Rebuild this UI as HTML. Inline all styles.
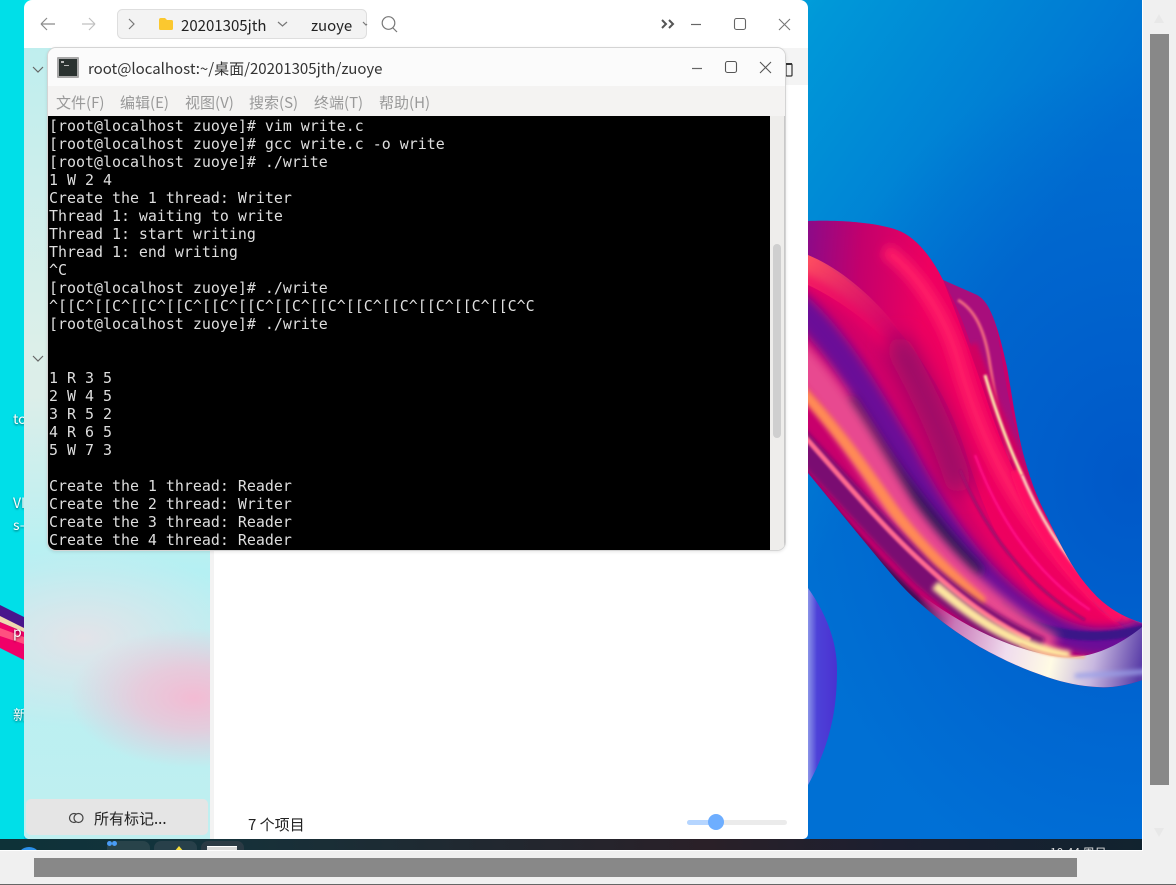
<!DOCTYPE html>
<html><head><meta charset="utf-8"><style>
html,body{margin:0;padding:0;width:1176px;height:885px;overflow:hidden;background:#f0f0f0}
*{box-sizing:border-box}
.a{position:absolute}
body{font-family:"Noto Sans CJK SC","Liberation Sans",sans-serif;color:#222}
.t{position:absolute;white-space:nowrap;line-height:20px}
#term{position:absolute;left:49px;top:117px;margin:0;font:14.95px/18px "DejaVu Sans Mono",monospace;color:#dedede;white-space:pre}
.dt{position:absolute;left:13px;color:#fff;font-size:14px;line-height:16px;text-shadow:0 1px 2px rgba(0,0,0,.6);white-space:nowrap}
</style></head><body>
<div class="a" id="desk" style="left:0;top:0;width:1142px;height:839px;overflow:hidden;background:radial-gradient(ellipse 340px 420px at 1130px 480px,#0058c8 0%,rgba(0,88,200,0) 100%),linear-gradient(125deg,#00e6ec 0%,#00d8e8 28%,#0098d8 48%,#0070d2 70%,#0070d8 100%)">
<div class="a" style="left:0;top:0;width:24px;height:839px;background:#00dfe8"></div>
<svg class="a" style="left:0;top:0" width="1142" height="839" viewBox="0 0 1142 839">
<defs>
<linearGradient id="top" x1="808" y1="230" x2="930" y2="240" gradientUnits="userSpaceOnUse"><stop offset="0" stop-color="#8c0a88"/><stop offset=".45" stop-color="#c4006c"/><stop offset="1" stop-color="#ee0060"/></linearGradient>
<linearGradient id="blob" x1="808" y1="0" x2="838" y2="0" gradientUnits="userSpaceOnUse"><stop offset="0" stop-color="#8a94e8"/><stop offset=".3" stop-color="#4d42d8"/><stop offset="1" stop-color="#4a30d0"/></linearGradient>
<linearGradient id="cream" x1="915" y1="610" x2="1142" y2="660" gradientUnits="userSpaceOnUse"><stop offset="0" stop-color="#b04a98" stop-opacity="0"/><stop offset=".18" stop-color="#c878b8"/><stop offset=".42" stop-color="#f0dcee"/><stop offset=".62" stop-color="#fffbe4"/><stop offset=".8" stop-color="#c8b8e0"/><stop offset="1" stop-color="#5a3ea8"/></linearGradient>
<linearGradient id="red" x1="808" y1="255" x2="900" y2="330" gradientUnits="userSpaceOnUse"><stop offset="0" stop-color="#ff5060"/><stop offset="1" stop-color="#e8306c" stop-opacity="0"/></linearGradient>
<clipPath id="sw"><path d="M808 221C830 220 872 221 897 230C914 236 930 254 943 280L977 295C986 300 990 310 993 317C1000 335 1003 350 1007 367C1012 395 1016 425 1023 453C1030 480 1038 500 1047 517C1058 540 1068 560 1080 577C1094 595 1108 612 1142 623V680C1125 686 1110 688 1097 687C1080 686 1065 683 1047 677C1020 668 1000 658 980 647C955 632 935 617 913 597C895 580 880 560 863 540L808 473Z"/></clipPath>
<filter id="b1" filterUnits="userSpaceOnUse" x="760" y="180" width="420" height="540"><feGaussianBlur stdDeviation="1"/></filter>
<filter id="b2" filterUnits="userSpaceOnUse" x="760" y="180" width="420" height="540"><feGaussianBlur stdDeviation="2.500"/></filter>
<filter id="b4" filterUnits="userSpaceOnUse" x="760" y="180" width="420" height="540"><feGaussianBlur stdDeviation="5"/></filter>
<filter id="b8" filterUnits="userSpaceOnUse" x="760" y="180" width="420" height="540"><feGaussianBlur stdDeviation="11"/></filter>
</defs>
<path d="M808 588C825 612 837 640 837 670C837 710 830 745 808 785Z" fill="url(#blob)"/>
<g clip-path="url(#sw)">
<rect x="800" y="215" width="345" height="480" fill="#c8006c"/>
<!-- back piece -->
<path d="M943 280L977 295C986 300 990 310 993 317C1003 350 1005 400 1023 453C1040 505 1070 570 1142 623L1100 640C1030 560 1000 470 985 400C975 350 960 310 943 280Z" fill="#a80e7c"/>
<path d="M958 300C975 310 985 330 990 365C995 395 1000 425 1010 460" stroke="#f06a80" stroke-width="3" fill="none" filter="url(#b1)"/>
<path d="M970 345C985 385 1000 425 1012 450C1030 500 1050 540 1080 575" stroke="#d00060" stroke-width="14" fill="none" filter="url(#b2)"/>
<!-- top flap -->
<path d="M808 221C830 220 872 221 897 230C914 236 930 254 943 280C955 310 968 345 980 380C1000 440 1030 530 1100 610L1142 640V660L1060 640C1010 590 985 520 960 450C935 380 880 300 808 255Z" fill="url(#top)"/>
<path d="M885 250C915 270 945 315 958 360C975 420 1000 480 1040 530C1070 570 1100 600 1135 625" stroke="#ff1c68" stroke-width="14" fill="none" filter="url(#b4)"/>
<!-- main body -->
<path d="M808 255C880 295 940 370 965 450C985 515 1015 590 1070 630C1090 642 1120 640 1142 625V660C1100 665 1060 660 1030 640C970 600 940 530 910 470C880 410 850 350 808 303Z" fill="#d40068"/>
<path d="M808 255C840 268 880 300 910 345L880 335C860 315 830 295 808 285Z" fill="url(#red)"/>
<path d="M800 278C850 300 900 350 935 420C965 490 1000 570 1060 615" stroke="#f00064" stroke-width="10" fill="none" filter="url(#b4)" opacity=".8"/>
<path d="M900 350C925 395 945 440 958 480" stroke="#920c68" stroke-width="26" fill="none" filter="url(#b8)" stroke-linecap="round"/>
<path d="M1015 470C1030 520 1065 575 1120 620" stroke="#ff0a64" stroke-width="10" fill="none" filter="url(#b2)"/>
<path d="M975 455C995 510 1030 570 1090 610" stroke="#ff1088" stroke-width="2.500" fill="none" filter="url(#b1)"/>
<path d="M960 470C985 530 1025 585 1085 620" stroke="#a0086c" stroke-width="3" fill="none" filter="url(#b1)"/>
<!-- highlight edge -->
<path d="M985 375C995 410 1010 450 1022 475" stroke="#fff2b0" stroke-width="3" fill="none" filter="url(#b1)"/>
<path d="M1022 475C1045 530 1085 595 1150 626" stroke="#ffd8c0" stroke-width="3" fill="none" filter="url(#b1)"/>
<!-- purple left band continuing to dark stripe -->
<path d="M790 300C835 335 870 400 900 450C930 510 980 590 1045 625C1080 645 1115 650 1160 625" stroke="#6a1098" stroke-width="28" fill="none" filter="url(#b4)"/>
<path d="M1000 605C1035 632 1085 648 1160 625" stroke="#3a1288" stroke-width="9" fill="none" filter="url(#b1)"/>
<path d="M850 405C875 445 895 475 915 500C935 525 950 545 975 570" stroke="#261650" stroke-width="15" fill="none" filter="url(#b4)" stroke-linecap="round"/>
<path d="M790 350C835 395 865 450 900 510C935 560 985 610 1050 650" stroke="#e84a90" stroke-width="32" fill="none" filter="url(#b4)"/>
<path d="M790 378C835 425 865 470 892 508C915 540 940 565 980 600" stroke="#ff8a55" stroke-width="11" fill="none" filter="url(#b2)" stroke-linecap="round"/>
<path d="M790 432C830 475 880 530 925 575C960 605 995 630 1040 650" stroke="#7a0a72" stroke-width="26" fill="none" filter="url(#b2)"/>
<path d="M790 420C835 470 880 525 925 565C960 597 990 620 1030 640" stroke="#ff6a90" stroke-width="5" fill="none" filter="url(#b1)"/>
<path d="M790 462C835 515 865 550 890 575C910 595 925 610 945 625" stroke="#3a1058" stroke-width="10" fill="none" filter="url(#b2)"/>
<path d="M935 585C970 615 1010 645 1070 656" stroke="#ffe8a0" stroke-width="10" fill="none" filter="url(#b2)"/>
<path d="M915 590C960 625 1010 650 1060 657C1090 660 1120 645 1142 627V690H915Z" fill="url(#cream)"/>
<path d="M1020 644C1040 654 1060 658 1085 657" stroke="#f5b890" stroke-width="2.500" fill="none" filter="url(#b1)"/>
<path d="M1075 676C1100 674 1125 674 1150 671" stroke="#9aa0e8" stroke-width="4" fill="none" filter="url(#b2)"/>
</g>
<path d="M0 605L24 617V631L0 620Z" fill="#48168c"/>
<path d="M0 616L24 628V632L0 622Z" fill="#f0d8b0"/>
<path d="M0 622L24 632V660L0 648Z" fill="#f00068"/>
<path d="M0 628L24 637V644L0 636Z" fill="#ff5080"/>
</svg>
<div class="dt" style="top:411px">to</div>
<div class="dt" style="top:495px">VI</div>
<div class="dt" style="top:517px">s-</div>
<div class="dt" style="top:624px">p</div>
<div class="dt" style="top:707px">新</div>
</div>

<!-- taskbar -->
<div class="a" style="left:0;top:839px;width:1142px;height:11px;overflow:hidden;background:linear-gradient(90deg,#0e3238 0%,#13333c 15%,#1f2a32 38%,#2a2028 62%,#1c1f30 78%,#11232f 100%)">
<div class="a" style="left:17px;top:8px;width:24px;height:24px;border-radius:50%;background:#2b8fe8"></div>
<div class="a" style="left:107px;top:2px;width:43px;height:20px;border-radius:7px;background:#28434a"></div>
<div class="a" style="left:154px;top:2px;width:43px;height:20px;border-radius:7px;background:#28404a"></div>
<div class="a" style="left:201px;top:2px;width:43px;height:20px;border-radius:7px;background:#2b3a44"></div>
<div class="a" style="left:107px;top:2px;width:5px;height:5px;border-radius:50%;background:#4a9cf5"></div>
<div class="a" style="left:112px;top:2px;width:5px;height:5px;border-radius:50%;background:#4a9cf5"></div>
<div class="a" style="left:174px;top:7px;width:0;height:0;border-left:5px solid transparent;border-right:5px solid transparent;border-bottom:6px solid #f6dc3c"></div>
<div class="a" style="left:207px;top:7px;width:30px;height:8px;background:#d8d8d8;border-top:1px solid #fff"></div>
<div class="t" style="left:1050px;top:7px;color:#ddd;font-size:12px;line-height:14px">10:44 周日</div>
</div>

<!-- page scrollbars -->
<div class="a" style="left:1142px;top:0;width:1px;height:851px;background:#fff"></div>
<div class="a" style="left:0;top:850px;width:1143px;height:1px;background:#fff"></div>
<div class="a" style="left:1143px;top:0;width:33px;height:885px;background:#f0f0f0"></div>
<div class="a" style="left:0;top:851px;width:1176px;height:34px;background:#f0f0f0"></div>
<div class="a" style="left:1150px;top:34px;width:19px;height:751px;background:#888"></div>
<div class="a" style="left:1154px;top:14px;width:0;height:0;border-left:5.5px solid transparent;border-right:5.5px solid transparent;border-bottom:9px solid #e8e8e8"></div>
<div class="a" style="left:1154px;top:828px;width:0;height:0;border-left:5.5px solid transparent;border-right:5.5px solid transparent;border-top:9px solid #e8e8e8"></div>
<div class="a" style="left:34px;top:858px;width:1043px;height:19px;background:#888"></div>
<div class="a" style="left:0;top:884px;width:1176px;height:1px;background:#666"></div>

<!-- file manager -->
<div class="a" style="left:24px;top:0;width:784px;height:839px;background:#fff;border-radius:8px 8px 5px 5px;overflow:hidden">
<div class="a" style="left:0;top:48px;width:186px;height:791px;background:radial-gradient(ellipse 125px 70px at 170px 650px,#f3bbd3 0%,rgba(243,190,212,.7) 45%,rgba(243,190,212,0) 100%),radial-gradient(ellipse 170px 90px at 60px 590px,rgba(232,226,232,.9) 0%,rgba(232,226,232,0) 100%),linear-gradient(180deg,#bfeeee 0%,#dcefe9 38%,#dceee9 44%,#b5f0f3 66%,#c0eff0 100%)"></div>
<div class="a" style="left:186px;top:48px;width:4px;height:791px;background:#f3f3f3"></div>
<div class="a" style="left:190px;top:48px;width:594px;height:37px;background:#f4f4f4"></div>
<div class="a" style="left:2px;top:799px;width:182px;height:36px;background:#e5e5e5;border-radius:5px"></div>
<div class="t" style="left:70px;top:809px;font-size:15px;color:#222">所有标记...</div>
<div class="t" style="left:224px;top:815px;font-size:15px;color:#222">7 个项目</div>
<div class="a" style="left:663px;top:820px;width:100px;height:5px;border-radius:3px;background:#ebebeb"></div>
<div class="a" style="left:663px;top:820px;width:29px;height:5px;border-radius:3px 0 0 3px;background:#b5d5ff"></div>
<div class="a" style="left:684px;top:814px;width:16px;height:16px;border-radius:50%;background:#6eaeff"></div>
</div>
<svg class="a" style="left:24px;top:0" width="784" height="839" viewBox="24 0 784 839" fill="none">
<path d="M55 24H41M41 24L47 18M41 24L47 30" stroke="#8a8a8a" stroke-width="1.2"/>
<path d="M82 24H95M95 24L89 18M95 24L89 30" stroke="#c0c0c0" stroke-width="1.2"/>
<rect x="117.500" y="9.500" width="249" height="29" rx="5" fill="#f3f3f3" stroke="#dedede"/>
<path d="M129 19L134 24L129 29" stroke="#777" stroke-width="1.2"/>
<path d="M159 20C159 18.800 159.500 18 161 18H165L167 20H171.500C172.500 20 173 20.500 173 21.500V28.500C173 29.500 172.500 30 171.500 30H160.500C159.500 30 159 29.500 159 28.500Z" fill="#fbc82f"/>
<path d="M278 22L282.500 26L287 22" stroke="#777" stroke-width="1.2"/>
<path d="M363 22L366 25L367 24" stroke="#777" stroke-width="1.2"/>
<circle cx="388.500" cy="23" r="6.300" stroke="#777" stroke-width="1.200"/>
<path d="M393 28L397 32" stroke="#777" stroke-width="1.200"/>
<path d="M662 20L666 24L662 28M669 20L673 24L669 28" stroke="#555" stroke-width="2"/>
<path d="M691 24.500H701" stroke="#666" stroke-width="1.200"/>
<rect x="734.500" y="18.500" width="11" height="11" rx="2" stroke="#666" stroke-width="1.100"/>
<path d="M779 19L790 30M790 19L779 30" stroke="#777" stroke-width="1.100"/>
<path d="M33 67L38 72L43 67" stroke="#666" stroke-width="1.200"/>
<path d="M33 356L38 361L43 356" stroke="#666" stroke-width="1.200"/>
<rect x="786" y="64" width="6" height="12" rx="1" stroke="#333" stroke-width="1.200"/>
<path d="M786 64H792" stroke="#333" stroke-width="2"/>
<circle cx="74" cy="818" r="4.500" stroke="#444" stroke-width="1.200"/>
<circle cx="78.500" cy="818" r="4.500" fill="#e5e5e5" stroke="#444" stroke-width="1.200"/>
</svg>
<div class="t" style="left:181px;top:16px;font-size:15px;color:#222">20201305jth</div>
<div class="t" style="left:311px;top:16px;font-size:15px;color:#222">zuoye</div>

<!-- terminal -->
<div class="a" style="left:47px;top:47px;width:739px;height:504px;border-radius:9px;border:1px solid #d4d4d4;box-shadow:0 1px 3px rgba(0,0,0,.1)"></div>
<div class="a" style="left:48px;top:48px;width:737px;height:502px;border-radius:8px;overflow:hidden;background:#eeedeb">
<div class="a" style="left:0;top:0;width:737px;height:38px;background:#fbfbfb"></div>
<div class="a" style="left:0;top:38px;width:737px;height:30px;background:#f4f3f2"></div>
<div class="a" style="left:0;top:68px;width:722px;height:434px;background:#000"></div>
<div class="a" style="left:725px;top:196px;width:8px;height:194px;border-radius:4px;background:#cfcfcf"></div>
<div class="a" style="left:736px;top:68px;width:1px;height:434px;background:#c8c8c8"></div>
</div>
<div class="a" style="left:57px;top:57px;width:22px;height:21px;background:#2a3230;border:2px solid #a8a8a8;border-radius:1px"></div>
<div class="a" style="left:61px;top:61px;width:3px;height:2px;background:#bbb"></div>
<div class="a" style="left:64px;top:65px;width:5px;height:1px;background:#bbb"></div>
<div class="t" style="left:88px;top:59px;font-size:15px;color:#333">root@localhost:~/桌面/20201305jth/zuoye</div>
<div class="t" style="left:56px;top:93px;font-size:15px;color:#999">文件(F)</div>
<div class="t" style="left:120px;top:93px;font-size:15px;color:#999">编辑(E)</div>
<div class="t" style="left:185px;top:93px;font-size:15px;color:#999">视图(V)</div>
<div class="t" style="left:249px;top:93px;font-size:15px;color:#999">搜索(S)</div>
<div class="t" style="left:314px;top:93px;font-size:15px;color:#999">终端(T)</div>
<div class="t" style="left:379px;top:93px;font-size:15px;color:#999">帮助(H)</div>
<svg class="a" style="left:680px;top:50px" width="100" height="36" viewBox="680 50 100 36" fill="none">
<path d="M692 68.500H702" stroke="#666" stroke-width="1.200"/>
<rect x="725.500" y="61.500" width="11" height="11" rx="2" stroke="#555" stroke-width="1.100"/>
<path d="M760 62L771 73M771 62L760 73" stroke="#555" stroke-width="1.100"/>
</svg>
<pre id="term">[root@localhost zuoye]# vim write.c
[root@localhost zuoye]# gcc write.c -o write
[root@localhost zuoye]# ./write
1 W 2 4
Create the 1 thread: Writer
Thread 1: waiting to write
Thread 1: start writing
Thread 1: end writing
^C
[root@localhost zuoye]# ./write
^[[C^[[C^[[C^[[C^[[C^[[C^[[C^[[C^[[C^[[C^[[C^[[C^[[C^C
[root@localhost zuoye]# ./write


1 R 3 5
2 W 4 5
3 R 5 2
4 R 6 5
5 W 7 3

Create the 1 thread: Reader
Create the 2 thread: Writer
Create the 3 thread: Reader
Create the 4 thread: Reader</pre>
</body></html>
